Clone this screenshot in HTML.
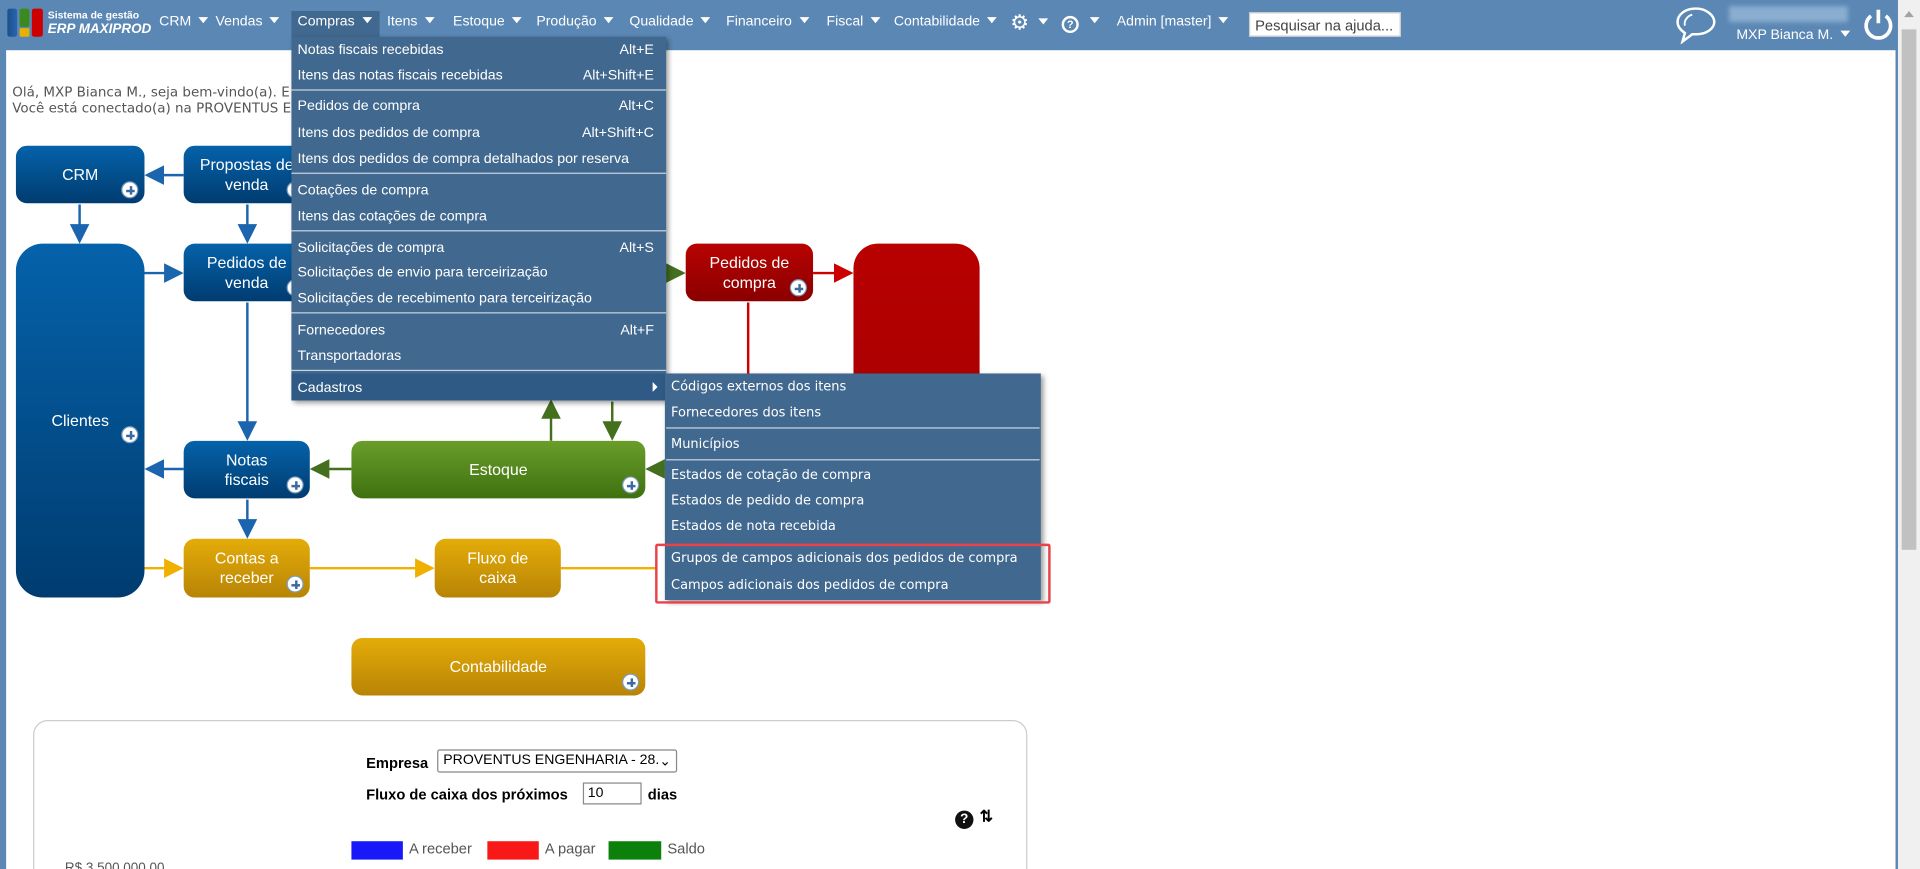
<!DOCTYPE html>
<html><head><meta charset="utf-8"><style>
*{box-sizing:border-box;margin:0;padding:0}
html,body{width:1920px;height:869px;overflow:hidden;background:#5b87b4}
#w{position:absolute;left:0;top:0;width:1568px;height:710px;overflow:hidden;transform:scale(1.22449);transform-origin:0 0;font-family:"Liberation Sans",sans-serif;background:#5b87b4}
.abs{position:absolute}
.nav{color:#fff;font-size:11.5px;top:12px;white-space:nowrap}
.tri{display:inline-block;width:0;height:0;border-left:4px solid transparent;border-right:4px solid transparent;border-top:5px solid #fff;margin-left:6px;vertical-align:2px}
#content{left:5px;top:41px;width:1543px;height:669px;background:#fff}
.box{position:absolute;color:#fff;font-size:13px;text-align:center;display:flex;align-items:center;justify-content:center;line-height:16px;border-radius:9px;font-family:"Liberation Sans",sans-serif}
.blue{background:linear-gradient(#0562aa,#003c70)}
.green{background:linear-gradient(#6a9e2a,#3f7010)}
.gold{background:linear-gradient(#e4ac08,#b88406)}
.red{background:linear-gradient(#b80202,#8a0000)}
.plus{position:absolute;width:14px;height:14px;border-radius:50%;background:#fff;border:1px solid #7a9cc0;right:5px;bottom:4px}
.plus:before{content:"";position:absolute;left:3px;top:5.5px;width:7px;height:2px;background:#3b6aa0}
.plus:after{content:"";position:absolute;left:5.5px;top:3px;width:2px;height:7px;background:#3b6aa0}
.menu{background:#41688f;color:#fff;font-size:11.6px;box-shadow:2px 2px 4px rgba(0,0,0,.4)}
.mi{position:absolute;left:5px;white-space:nowrap}
.sc{position:absolute;right:10px}
.sep{position:absolute;left:0;right:0;height:1px;background:#c8d4e0}
</style></head><body><div id="w">
<div class="abs" style="left:6px;top:7px;width:8px;height:23px;background:linear-gradient(90deg,#1c4f8a,#2866b0);border-radius:2px"></div>
<div class="abs" style="left:16px;top:7px;width:8px;height:15px;background:#3b8a1d;border-radius:2px"></div>
<div class="abs" style="left:16px;top:23px;width:8px;height:7px;background:#e8b000;border-radius:1px"></div>
<div class="abs" style="left:26px;top:7px;width:9px;height:23px;background:#c00;border-radius:2px"></div>
<div class="abs" style="left:39px;top:7px;color:#fff;font-size:8.5px;font-weight:bold">Sistema de gestão</div>
<div class="abs" style="left:39px;top:18px;color:#fff;font-size:11px;font-weight:bold;font-style:italic">ERP MAXIPROD</div>
<div class="abs" style="left:238px;top:9px;width:72px;height:22px;background:#41688f"></div>
<div class="abs nav" style="left:130px">CRM<span class="tri"></span></div>
<div class="abs nav" style="left:176px">Vendas<span class="tri"></span></div>
<div class="abs nav" style="left:243px">Compras<span class="tri"></span></div>
<div class="abs nav" style="left:316px">Itens<span class="tri"></span></div>
<div class="abs nav" style="left:370px">Estoque<span class="tri"></span></div>
<div class="abs nav" style="left:438px">Produção<span class="tri"></span></div>
<div class="abs nav" style="left:514px">Qualidade<span class="tri"></span></div>
<div class="abs nav" style="left:593px">Financeiro<span class="tri"></span></div>
<div class="abs nav" style="left:675px">Fiscal<span class="tri"></span></div>
<div class="abs nav" style="left:730px">Contabilidade<span class="tri"></span></div>
<div class="abs nav" style="left:825px;top:9px;font-size:17px">⚙<span class="tri" style="vertical-align:4px;margin-left:8px"></span></div>
<div class="abs" style="left:867px;top:13px;width:14px;height:14px;border:2px solid #fff;border-radius:50%;color:#fff;font-size:9px;font-weight:bold;text-align:center;line-height:10px">?</div>
<div class="abs nav" style="left:884px"><span class="tri"></span></div>
<div class="abs nav" style="left:912px">Admin [master]<span class="tri"></span></div>
<div class="abs" style="left:1020px;top:10px;width:124px;height:20px;background:#fff;border:1px solid #ccc;font-size:12px;color:#444;padding:3px 4px;white-space:nowrap;overflow:hidden">Pesquisar na ajuda...</div>
<svg class="abs" style="left:1367px;top:4px" width="37" height="32" viewBox="0 0 37 32"><path d="M18 3C9 3 3 8 3 14c0 4 3 7 6 9l-2 7 8-6c1 0 2 0 3 0 9 0 15-5 15-10S27 3 18 3z" fill="none" stroke="#fff" stroke-width="2"/><path d="M9 17c-1-4 2-8 6-9" fill="none" stroke="#fff" stroke-width="1.5"/></svg>
<div class="abs" style="left:1412px;top:5px;width:97px;height:13px;background:#8aaed0;filter:blur(2px)"></div>
<div class="abs nav" style="left:1418px;top:23px">MXP Bianca M.<span class="tri"></span></div>
<svg class="abs" style="left:1521px;top:6px" width="26" height="28" viewBox="0 0 26 28"><path d="M7 7A10 10 0 1 0 19 7" fill="none" stroke="#fff" stroke-width="3"/><path d="M13 2v11" stroke="#fff" stroke-width="3"/></svg>
<div class="abs" style="left:1550px;top:0;width:18px;height:710px;background:#f0f0f0"></div>
<div class="abs" style="left:1553px;top:24px;width:12px;height:425px;background:#c1c1c1"></div>
<div class="abs" style="left:1555px;top:9px;border-left:4px solid transparent;border-right:4px solid transparent;border-bottom:5px solid #a3a3a3"></div>
<div id="content" class="abs">
<div class="abs" style="left:5px;top:28px;font-size:11px;color:#555;line-height:13px;font-family:'DejaVu Sans',sans-serif;white-space:nowrap">Olá, MXP Bianca M., seja bem-vindo(a). E<br>Você está conectado(a) na PROVENTUS E</div>
</div>
<svg class="abs" style="left:0;top:0" width="1568" height="710">
<defs>
<marker id="ab" markerWidth="8" markerHeight="8" refX="7" refY="4" orient="auto"><path d="M0 0L8 4L0 8z" fill="#1a65ad"/></marker>
<marker id="ag" markerWidth="8" markerHeight="8" refX="7" refY="4" orient="auto"><path d="M0 0L8 4L0 8z" fill="#44701e"/></marker>
<marker id="ao" markerWidth="8" markerHeight="8" refX="7" refY="4" orient="auto"><path d="M0 0L8 4L0 8z" fill="#f0b000"/></marker>
<marker id="ar" markerWidth="8" markerHeight="8" refX="7" refY="4" orient="auto"><path d="M0 0L8 4L0 8z" fill="#c00"/></marker>
</defs>
<g stroke-width="2" fill="none">
<path d="M150 143H120" stroke="#1a65ad" marker-end="url(#ab)"/>
<path d="M65 167V197" stroke="#1a65ad" marker-end="url(#ab)"/>
<path d="M202 167V197" stroke="#1a65ad" marker-end="url(#ab)"/>
<path d="M118 223H148" stroke="#1a65ad" marker-end="url(#ab)"/>
<path d="M202 247V358" stroke="#1a65ad" marker-end="url(#ab)"/>
<path d="M150 383H120" stroke="#1a65ad" marker-end="url(#ab)"/>
<path d="M202 408V438" stroke="#1a65ad" marker-end="url(#ab)"/>
<path d="M287 383H255" stroke="#44701e" marker-end="url(#ag)"/>
<path d="M543 383H529" stroke="#44701e" marker-end="url(#ag)"/>
<path d="M450 360V328" stroke="#44701e" marker-end="url(#ag)"/>
<path d="M500 328V358" stroke="#44701e" marker-end="url(#ag)"/>
<path d="M544 223H558" stroke="#44701e" marker-end="url(#ag)"/>
<path d="M118 464H148" stroke="#f0b000" marker-end="url(#ao)"/>
<path d="M253 464H353" stroke="#f0b000" marker-end="url(#ao)"/>
<path d="M458 464H536" stroke="#f0b000"/>
<path d="M664 223H695" stroke="#c00" marker-end="url(#ar)"/>
<path d="M611 247V306" stroke="#c00"/>
</g></svg>
<div class="box blue" style="left:13px;top:119px;width:105px;height:47px">CRM<i class="plus"></i></div>
<div class="box blue" style="left:150px;top:119px;width:103px;height:47px">Propostas de<br>venda<i class="plus"></i></div>
<div class="box blue" style="left:13px;top:199px;width:105px;height:289px;border-radius:22px;align-items:flex-start;padding-top:137px">Clientes<i class="plus" style="bottom:auto;top:149px"></i></div>
<div class="box blue" style="left:150px;top:199px;width:103px;height:47px">Pedidos de<br>venda<i class="plus"></i></div>
<div class="box blue" style="left:150px;top:360px;width:103px;height:47px">Notas<br>fiscais<i class="plus"></i></div>
<div class="box green" style="left:287px;top:360px;width:240px;height:47px">Estoque<i class="plus"></i></div>
<div class="box gold" style="left:150px;top:440px;width:103px;height:48px">Contas a<br>receber<i class="plus"></i></div>
<div class="box gold" style="left:355px;top:440px;width:103px;height:48px">Fluxo de<br>caixa</div>
<div class="box gold" style="left:287px;top:521px;width:240px;height:47px">Contabilidade<i class="plus"></i></div>
<div class="box red" style="left:560px;top:199px;width:104px;height:47px">Pedidos de<br>compra<i class="plus"></i></div>
<div class="box red" style="left:697px;top:199px;width:103px;height:220px;border-radius:20px;background:linear-gradient(#b80000,#a00000)"></div>
<div class="abs menu" style="left:238px;top:30px;width:306px;height:297px">
<div class="mi" style="top:4px">Notas fiscais recebidas</div><div class="sc" style="top:4px">Alt+E</div>
<div class="mi" style="top:25px">Itens das notas fiscais recebidas</div><div class="sc" style="top:25px">Alt+Shift+E</div>
<div class="sep" style="top:43px"></div>
<div class="mi" style="top:50px">Pedidos de compra</div><div class="sc" style="top:50px">Alt+C</div>
<div class="mi" style="top:72px">Itens dos pedidos de compra</div><div class="sc" style="top:72px">Alt+Shift+C</div>
<div class="mi" style="top:93px">Itens dos pedidos de compra detalhados por reserva</div>
<div class="sep" style="top:111px"></div>
<div class="mi" style="top:119px">Cotações de compra</div>
<div class="mi" style="top:140px">Itens das cotações de compra</div>
<div class="sep" style="top:158px"></div>
<div class="mi" style="top:166px">Solicitações de compra</div><div class="sc" style="top:166px">Alt+S</div>
<div class="mi" style="top:186px">Solicitações de envio para terceirização</div>
<div class="mi" style="top:207px">Solicitações de recebimento para terceirização</div>
<div class="sep" style="top:225px"></div>
<div class="mi" style="top:233px">Fornecedores</div><div class="sc" style="top:233px">Alt+F</div>
<div class="mi" style="top:254px">Transportadoras</div>
<div class="sep" style="top:272px"></div>
<div class="abs" style="left:0;top:275px;width:306px;height:22px;background:#2e5a85"></div>
<div class="mi" style="top:280px">Cadastros</div>
<div class="abs" style="left:295px;top:282px;border-top:4px solid transparent;border-bottom:4px solid transparent;border-left:4px solid #fff"></div>
</div>
<div class="abs menu" style="left:543px;top:305px;width:307px;height:185px;font-family:'DejaVu Sans',sans-serif;font-size:10.6px">
<div class="mi" style="top:5px">Códigos externos dos itens</div>
<div class="mi" style="top:26px">Fornecedores dos itens</div>
<div class="sep" style="top:44px;left:1px;right:1px"></div>
<div class="mi" style="top:52px">Municípios</div>
<div class="sep" style="top:70px;left:1px;right:1px"></div>
<div class="mi" style="top:77px">Estados de cotação de compra</div>
<div class="mi" style="top:98px">Estados de pedido de compra</div>
<div class="mi" style="top:119px">Estados de nota recebida</div>
<div class="mi" style="top:145px">Grupos de campos adicionais dos pedidos de compra</div>
<div class="mi" style="top:167px">Campos adicionais dos pedidos de compra</div>
</div>
<div class="abs" style="left:535px;top:444px;width:323px;height:49px;border:2px solid #e8434a;border-radius:2px"></div>
<div class="abs" style="left:27px;top:588px;width:812px;height:140px;border:1px solid #ccc;border-radius:12px;background:#fff"></div>
<div class="abs" style="left:299px;top:616px;font-size:12px;font-weight:bold">Empresa</div>
<div class="abs" style="left:357px;top:612px;width:196px;height:19px;border:1px solid #888;border-radius:2px;font-size:11.5px;padding:2px 4px;white-space:nowrap;overflow:hidden">PROVENTUS ENGENHARIA - 28.<span style="position:absolute;right:4px;top:1px">⌄</span></div>
<div class="abs" style="left:299px;top:642px;font-size:12px;font-weight:bold">Fluxo de caixa dos próximos</div>
<div class="abs" style="left:476px;top:639px;width:48px;height:18px;border:1px solid #888;font-size:11.5px;padding:2px 3px">10</div>
<div class="abs" style="left:529px;top:642px;font-size:12px;font-weight:bold">dias</div>
<div class="abs" style="left:780px;top:662px;width:15px;height:15px;border-radius:50%;background:#111;color:#fff;font-size:11px;font-weight:bold;text-align:center;line-height:15px">?</div>
<div class="abs" style="left:800px;top:659px;font-size:13px;font-weight:bold">⇅</div>
<div class="abs" style="left:287px;top:687px;width:42px;height:15px;background:#1818f8"></div>
<div class="abs" style="left:334px;top:686px;font-size:12px;color:#555">A receber</div>
<div class="abs" style="left:398px;top:687px;width:42px;height:15px;background:#f81818"></div>
<div class="abs" style="left:445px;top:686px;font-size:12px;color:#555">A pagar</div>
<div class="abs" style="left:497px;top:687px;width:43px;height:15px;background:#0b800b"></div>
<div class="abs" style="left:545px;top:686px;font-size:12px;color:#555">Saldo</div>
<div class="abs" style="left:53px;top:703px;font-size:11px;color:#555">R$ 3.500.000,00</div>
</div></body></html>
